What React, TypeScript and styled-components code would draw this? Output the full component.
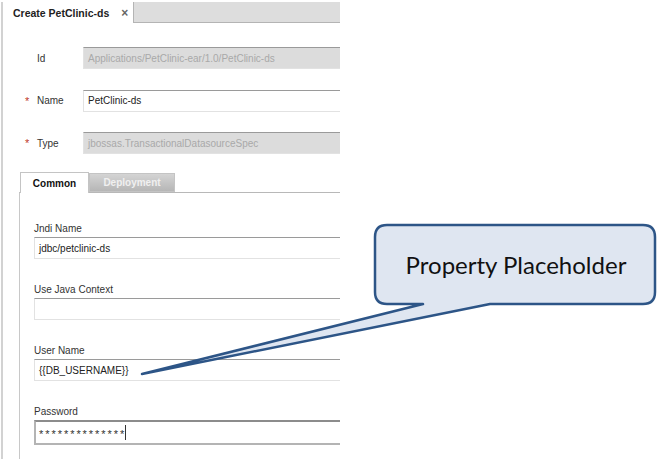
import React from 'react';
import styled, { createGlobalStyle } from 'styled-components';

const GlobalStyle = createGlobalStyle`
  html, body {
    margin: 0;
    padding: 0;
    background: #ffffff;
  }
  body {
    font-family: "Liberation Sans", Arial, sans-serif;
    font-size: 10px;
    color: #333;
  }
`;

const Stage = styled.div`
  position: relative;
  width: 657px;
  height: 459px;
  overflow: hidden;
  background: #fff;
`;

const Editor = styled.div`
  width: 337px;
  height: 457px;
  margin: 2px 0 0 1px;
  border-left: 2px solid #d2d2d2;
  overflow: hidden;
`;

const TabStrip = styled.div`
  display: flex;
  align-items: flex-end;
  height: 20px;
  background: #dddddd;
  border-bottom: 1px solid #b4b4b4;
`;

const EditorTab = styled.div`
  display: flex;
  align-items: center;
  gap: 12px;
  height: 21px;
  margin-bottom: -1px;
  padding: 0 5px 0 10px;
  background: #fff;
  border-right: 1px solid #b4b4b4;
  font-weight: bold;
  font-size: 10.5px;
  color: #222;
`;

const Close = styled.span`
  font-size: 12px;
  color: #666;
  font-weight: bold;
`;

const Header = styled.div`
  display: flex;
  flex-direction: column;
  gap: 20.5px;
  padding: 24px 0 0 20px;
`;

const FieldRow = styled.div`
  display: grid;
  grid-template-columns: 14px 46px 1fr;
  align-items: center;
`;

const Req = styled.span`
  color: #c0392b;
  font-size: 11px;
  padding-left: 2px;
`;

const RowLabel = styled.span`
  font-size: 10px;
  color: #333;
`;

const Input = styled.div<{ $disabled?: boolean; $focused?: boolean }>`
  display: flex;
  align-items: center;
  box-sizing: border-box;
  width: 320px;
  height: ${(p) => (p.$focused ? 25 : 22)}px;
  padding-left: ${(p) => (p.$focused ? 3 : 4)}px;
  background: ${(p) => (p.$disabled ? '#dcdcdc' : '#fff')};
  border: ${(p) => (p.$focused ? 2 : 1)}px solid ${(p) => (p.$focused ? '#b4b4b4' : '#e2e2e2')};
  border-top-color: ${(p) => (p.$focused ? '#8c8c8c' : '#9a9a9a')};
  color: ${(p) => (p.$disabled ? '#a9a9a9' : '#222')};
  font-size: 10px;
  white-space: nowrap;
`;

const TabSection = styled.div`
  margin: 18px 0 0 16px;
`;

const InnerTabs = styled.div`
  display: flex;
  align-items: flex-end;
  height: 20px;
  padding-left: 1px;
`;

const InnerTab = styled.div<{ $active?: boolean }>`
  display: flex;
  align-items: center;
  justify-content: center;
  box-sizing: border-box;
  width: ${(p) => (p.$active ? 69 : 86)}px;
  height: ${(p) => (p.$active ? 21 : 19)}px;
  margin-bottom: ${(p) => (p.$active ? -1 : 0)}px;
  border: 1px solid #c4c4c4;
  border-bottom: ${(p) => (p.$active ? 'none' : '1px solid #c4c4c4')};
  background: ${(p) => (p.$active ? '#fff' : 'linear-gradient(#d4d4d4, #b6b6b6)')};
  color: ${(p) => (p.$active ? '#111' : '#f0f0f0')};
  font-weight: bold;
  font-size: 10px;
`;

const TabPanel = styled.div`
  display: flex;
  flex-direction: column;
  gap: 24px;
  height: 300px;
  padding: 29px 0 0 14px;
  border-left: 1px solid #c8c8c8;
  border-top: 1px solid #b8b8b8;
`;

const Field = styled.div`
  display: flex;
  flex-direction: column;
  gap: 2px;
`;

const FieldLabel = styled.span`
  line-height: 13px;
  font-size: 10px;
  color: #333;
`;

const Masked = styled.span`
  font-size: 11px;
  letter-spacing: 1.95px;
  color: #333;
  padding-top: 3px;
`;

const Caret = styled.span`
  display: inline-block;
  width: 1px;
  height: 15px;
  margin-left: -1px;
  background: #333;
`;

const Callout = styled.div`
  position: absolute;
  left: 0;
  top: 0;
  width: 657px;
  height: 459px;
  pointer-events: none;
`;

const CalloutText = styled.div`
  position: absolute;
  left: 375px;
  top: 225px;
  width: 282px;
  height: 79px;
  display: flex;
  align-items: center;
  justify-content: center;
  font-family: Lato, "Open Sans", sans-serif;
  font-size: 24px;
  color: #111;
`;

const topFields = [
  { label: 'Id', value: 'Applications/PetClinic-ear/1.0/PetClinic-ds', required: false, disabled: true },
  { label: 'Name', value: 'PetClinic-ds', required: true, disabled: false },
  { label: 'Type', value: 'jbossas.TransactionalDatasourceSpec', required: true, disabled: true },
];

const panelFields = [
  { label: 'Jndi Name', value: 'jdbc/petclinic-ds' },
  { label: 'Use Java Context', value: '' },
  { label: 'User Name', value: '{{DB_USERNAME}}' },
];

const App: React.FC = () => (
  <Stage>
    <GlobalStyle />
    <Editor>
      <TabStrip>
        <EditorTab>
          Create PetClinic-ds
          <Close>×</Close>
        </EditorTab>
      </TabStrip>
      <Header>
        {topFields.map((f) => (
          <FieldRow key={f.label}>
            <Req>{f.required ? '*' : ''}</Req>
            <RowLabel>{f.label}</RowLabel>
            <Input $disabled={f.disabled}>{f.value}</Input>
          </FieldRow>
        ))}
      </Header>
      <TabSection>
        <InnerTabs>
          <InnerTab $active>Common</InnerTab>
          <InnerTab>Deployment</InnerTab>
        </InnerTabs>
        <TabPanel>
          {panelFields.map((f) => (
            <Field key={f.label}>
              <FieldLabel>{f.label}</FieldLabel>
              <Input>{f.value}</Input>
            </Field>
          ))}
          <Field>
            <FieldLabel>Password</FieldLabel>
            <Input $focused>
              <Masked>**************</Masked>
              <Caret />
            </Input>
          </Field>
        </TabPanel>
      </TabSection>
    </Editor>
    <Callout>
      <svg width="657" height="459" viewBox="0 0 657 459">
        <path
          d="M387 225 H643 Q655 225 655 237 V292 Q655 304 643 304 H490 L142 374 L423 304 H387 Q375 304 375 292 V237 Q375 225 387 225 Z"
          fill="#dfe6f1"
          stroke="#2d5587"
          strokeWidth="2.5"
          strokeLinejoin="round"
        />
      </svg>
      <CalloutText>Property Placeholder</CalloutText>
    </Callout>
  </Stage>
);

export default App;
